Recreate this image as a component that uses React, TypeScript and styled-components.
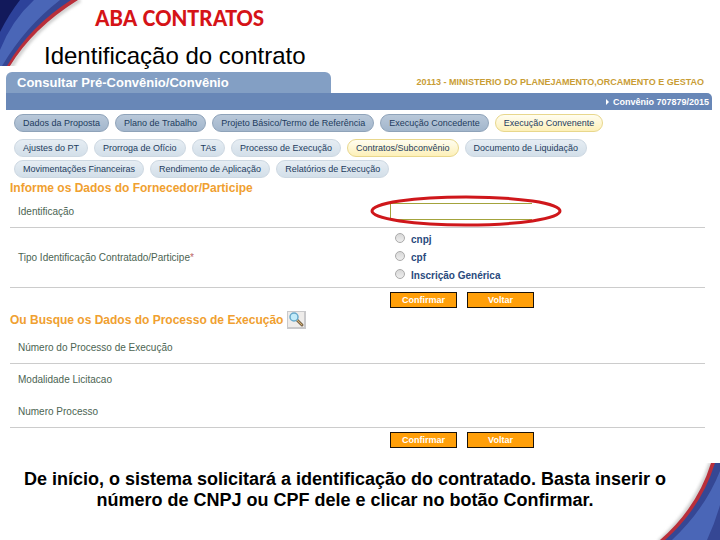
import React, { useState } from "react";
import styled, { createGlobalStyle } from "styled-components";

const GlobalStyle = createGlobalStyle`
  *, *::before, *::after { box-sizing: border-box; }
  body {
    margin: 0;
    background: #fff;
    font-family: "Liberation Sans", Arial, sans-serif;
  }
`;

const Slide = styled.main`
  position: relative;
  display: flex;
  flex-direction: column;
  min-height: 100vh;
  overflow: hidden;
`;

const Corner = styled.svg<{ $place: "top" | "bottom" }>`
  position: absolute;
  ${(p) => (p.$place === "top" ? "top: 0; left: 0;" : "bottom: 0; right: 0;")}
  pointer-events: none;
`;

const SlideHeader = styled.header`
  position: relative;
  height: 72px;
  padding-top: 6px;
`;

const SlideTitle = styled.h1`
  margin: 0;
  padding-left: 95px;
  color: #d51317;
  font: 700 24px/24px Carlito, Lato, sans-serif;
`;

const SlideSubtitle = styled.h2`
  margin: 0;
  padding: 12px 0 0 44px;
  font-size: 24px;
  font-weight: 400;
  line-height: 28px;
`;

const Panel = styled.section`
  position: relative;
  padding: 0 8px 16px 6px;
`;

const PanelTop = styled.div`
  display: flex;
  justify-content: space-between;
  align-items: stretch;
  height: 21px;
`;

const PanelTitle = styled.h3`
  flex: 0 0 46%;
  margin: 0;
  padding-left: 11px;
  border-radius: 6px 6px 0 0;
  background: #839fc4;
  color: #fff;
  font-size: 13px;
  line-height: 22px;
`;

const Agency = styled.span`
  padding-right: 8px;
  color: #c99d35;
  font-size: 9px;
  font-weight: 700;
  line-height: 20px;
  white-space: nowrap;
`;

const AgreementBar = styled.div`
  display: flex;
  justify-content: flex-end;
  align-items: center;
  gap: 4px;
  height: 17px;
  padding-right: 3px;
  border-top-right-radius: 5px;
  background: #6887b7;
  color: #fff;
  font-size: 9px;
  font-weight: 700;
`;

const Tabs = styled.nav`
  display: flex;
  flex-direction: column;
  gap: 3px;
  padding: 4px 0 0 8px;
`;

const TabRow = styled.div<{ $main?: boolean }>`
  display: flex;
  gap: 6px;
  margin-bottom: ${(p) => (p.$main ? "4px" : "0")};
`;

type TabKind = "main" | "sub" | "active";
const tabColors: Record<TabKind, string> = {
  main: "border-color: #8fa3b9; background: linear-gradient(#b9c8d9, #a2b6cc);",
  sub: "border-color: #cdd8e2; background: linear-gradient(#e6edf3, #d3dfe9);",
  active: "border-color: #e8d78c; background: linear-gradient(#fffdf0, #fdf0b8);",
};

const Tab = styled.button<{ $kind: TabKind }>`
  height: 18px;
  padding: 0 8px;
  border: 1px solid;
  border-radius: 9px;
  ${(p) => tabColors[p.$kind]}
  color: #1d3c5e;
  font: 9px/14px "Liberation Sans", Arial, sans-serif;
  white-space: nowrap;
`;

const Form = styled.form`
  padding: 2px 7px 0 4px;
`;

const FormHeading = styled.h4<{ $spaced?: boolean }>`
  display: flex;
  align-items: center;
  gap: 4px;
  height: ${(p) => (p.$spaced ? "24px" : "16px")};
  margin: 0;
  color: #f0a030;
  font-size: 12px;
`;

const Row = styled.div<{ $size?: "tall"; $line?: boolean }>`
  display: grid;
  grid-template-columns: 372px 1fr;
  align-items: center;
  min-height: ${(p) => (p.$size === "tall" ? "60px" : "32px")};
  padding-left: 8px;
  border-bottom: 1px solid ${(p) => (p.$line ? "#ccc" : "transparent")};
  color: #4c6452;
  font-size: 10px;
`;

const Required = styled.span`
  color: #b66;
`;

const FieldWrap = styled.div`
  position: relative;
  height: 17px;
`;

const TextField = styled.input`
  display: block;
  width: 142px;
  height: 17px;
  padding: 0 4px;
  border: 1px solid #a3a33c;
  border-right: 0;
  background: #fff;
  font-size: 10px;
`;

const Highlight = styled.svg`
  position: absolute;
  top: -8px;
  left: -20px;
  pointer-events: none;
`;

const Options = styled.fieldset`
  margin: 0;
  padding: 0 0 0 5px;
  border: 0;
`;

const Option = styled.label`
  display: flex;
  align-items: center;
  gap: 6px;
  height: 18px;
  color: #294a7d;
  font-weight: 700;
`;

const Radio = styled.input`
  appearance: none;
  width: 10px;
  height: 10px;
  margin: 0 0 4px;
  border: 1px solid #aaa;
  border-radius: 50%;
  background: linear-gradient(#d8d8d8, #eee);
  &:checked { background: radial-gradient(#444 35%, #eee 40%); }
`;

const Actions = styled.div`
  display: flex;
  gap: 10px;
  padding: 4px 0 0 380px;
`;

const Action = styled.button`
  width: 67px;
  height: 16px;
  padding: 0;
  border: 1px solid #1a1208;
  background: #ff9f09;
  color: #fff;
  font: 700 9px/13px "Liberation Sans", Arial, sans-serif;
`;

const SearchButton = styled.button`
  width: 19px;
  height: 18px;
  padding: 0;
  border: 0;
  background: none;
  svg { display: block; }
`;

const Caption = styled.p`
  position: relative;
  margin: 0;
  padding: 5px 46px 0 16px;
  font-size: 18px;
  font-weight: 700;
  line-height: 21px;
  text-align: center;
`;

const mainTabs = ["Dados da Proposta", "Plano de Trabalho", "Projeto Básico/Termo de Referência", "Execução Concedente", "Execução Convenente"];
const subTabs = ["Ajustes do PT", "Prorroga de Ofício", "TAs", "Processo de Execução", "Contratos/Subconvênio", "Documento de Liquidação"];
const reportTabs = ["Movimentações Financeiras", "Rendimento de Aplicação", "Relatórios de Execução"];

const TabLine = ({ names, active, main }: { names: string[]; active?: string; main?: boolean }) => (
  <TabRow $main={main}>
    {names.map((name) => (
      <Tab key={name} type="button" $kind={name === active ? "active" : main ? "main" : "sub"}>
        {name}
      </Tab>
    ))}
  </TabRow>
);

const ActionButtons = () => (
  <Actions>
    <Action type="button">Confirmar</Action>
    <Action type="button">Voltar</Action>
  </Actions>
);

export default function App() {
  const [kind, setKind] = useState("");

  return (
    <>
      <GlobalStyle />
      <Slide>
        <Corner $place="top" width="84" height="66" viewBox="0 0 84 66" aria-hidden="true">
          <defs>
            <filter id="topShade"><feGaussianBlur stdDeviation="1.5" /></filter>
          </defs>
          <path d="M11 67Q33 28 80 0" fill="none" stroke="#ccc" strokeWidth="4" filter="url(#topShade)" />
          <path d="M0 0H78Q33 28 10 66H0Z" fill="#b92f3b" />
          <path d="M0 0H71Q29 27 7 66H0Z" fill="#354794" />
          <path d="M0 0H60Q25 27 2 66H0Z" fill="#4a66b7" />
          <path d="M0 0H34Q12 20 0 50Z" fill="#2d429a" />
          <path d="M0 0H20Q9 14 0 32Z" fill="#12195b" />
        </Corner>
        <Corner $place="bottom" width="70" height="77" viewBox="0 0 70 77" aria-hidden="true">
          <defs>
            <filter id="bottomShade"><feGaussianBlur stdDeviation="1.5" /></filter>
          </defs>
          <path d="M61 0Q46 45 9 79" fill="none" stroke="#ccc" strokeWidth="4" filter="url(#bottomShade)" />
          <path d="M61 0H70V77H10Q47 45 61 0Z" fill="#b92f3b" />
          <path d="M65 0H70V77H15Q51 45 65 0Z" fill="#354794" />
          <path d="M70 8V77H22Q55 46 70 8Z" fill="#4a66b7" />
          <path d="M70 42V77H57Q65 60 70 42Z" fill="#354794" />
        </Corner>

        <SlideHeader>
          <SlideTitle>ABA CONTRATOS</SlideTitle>
          <SlideSubtitle>Identificação do contrato</SlideSubtitle>
        </SlideHeader>

        <Panel>
          <PanelTop>
            <PanelTitle>Consultar Pré-Convênio/Convênio</PanelTitle>
            <Agency>20113 - MINISTERIO DO PLANEJAMENTO,ORCAMENTO E GESTAO</Agency>
          </PanelTop>
          <AgreementBar>
            <svg width="3" height="6" viewBox="0 0 3 6" aria-hidden="true"><path d="M0 0L3 3L0 6Z" fill="#fff" /></svg>
            Convênio 707879/2015
          </AgreementBar>

          <Tabs>
            <TabLine names={mainTabs} active="Execução Convenente" main />
            <TabLine names={subTabs} active="Contratos/Subconvênio" />
            <TabLine names={reportTabs} />
          </Tabs>

          <Form>
            <FormHeading>Informe os Dados do Fornecedor/Participe</FormHeading>
            <Row $line>
              <label htmlFor="ident">Identificação</label>
              <FieldWrap>
                <TextField id="ident" type="text" />
                <Highlight width="192" height="32" viewBox="0 0 192 32" aria-hidden="true">
                  <ellipse cx="96" cy="16" rx="94" ry="14" fill="none" stroke="#cf171b" strokeWidth="3" />
                </Highlight>
              </FieldWrap>
            </Row>
            <Row $size="tall" $line>
              <span id="kind">Tipo Identificação Contratado/Participe<Required>*</Required></span>
              <Options aria-labelledby="kind">
                {["cnpj", "cpf", "Inscrição Genérica"].map((name) => (
                  <Option key={name}>
                    <Radio type="radio" name="kind" checked={kind === name} onChange={() => setKind(name)} />
                    {name}
                  </Option>
                ))}
              </Options>
            </Row>
            <ActionButtons />
            <FormHeading $spaced>
              Ou Busque os Dados do Processo de Execução
              <SearchButton type="button" aria-label="Buscar">
                <svg width="19" height="18" viewBox="0 0 19 18">
                  <rect width="19" height="18" fill="#c9c9cb" />
                  <rect x="1" y="1" width="16" height="15" fill="#eeecea" />
                  <path d="M10 9L15 14" stroke="#7f6a4f" strokeWidth="3" strokeLinecap="round" />
                  <path d="M10 9L15 14" stroke="#d9b36b" strokeWidth="1" />
                  <circle cx="7" cy="6" r="4" fill="#c3ecfa" stroke="#67a9cb" strokeWidth="1.5" />
                </svg>
              </SearchButton>
            </FormHeading>
            <Row $line>Número do Processo de Execução</Row>
            <Row>Modalidade Licitacao</Row>
            <Row $line>Numero Processo</Row>
            <ActionButtons />
          </Form>
        </Panel>

        <Caption>
          De início, o sistema solicitará a identificação do contratado. Basta inserir o número de CNPJ ou CPF dele e
          clicar no botão Confirmar.
        </Caption>
      </Slide>
    </>
  );
}
